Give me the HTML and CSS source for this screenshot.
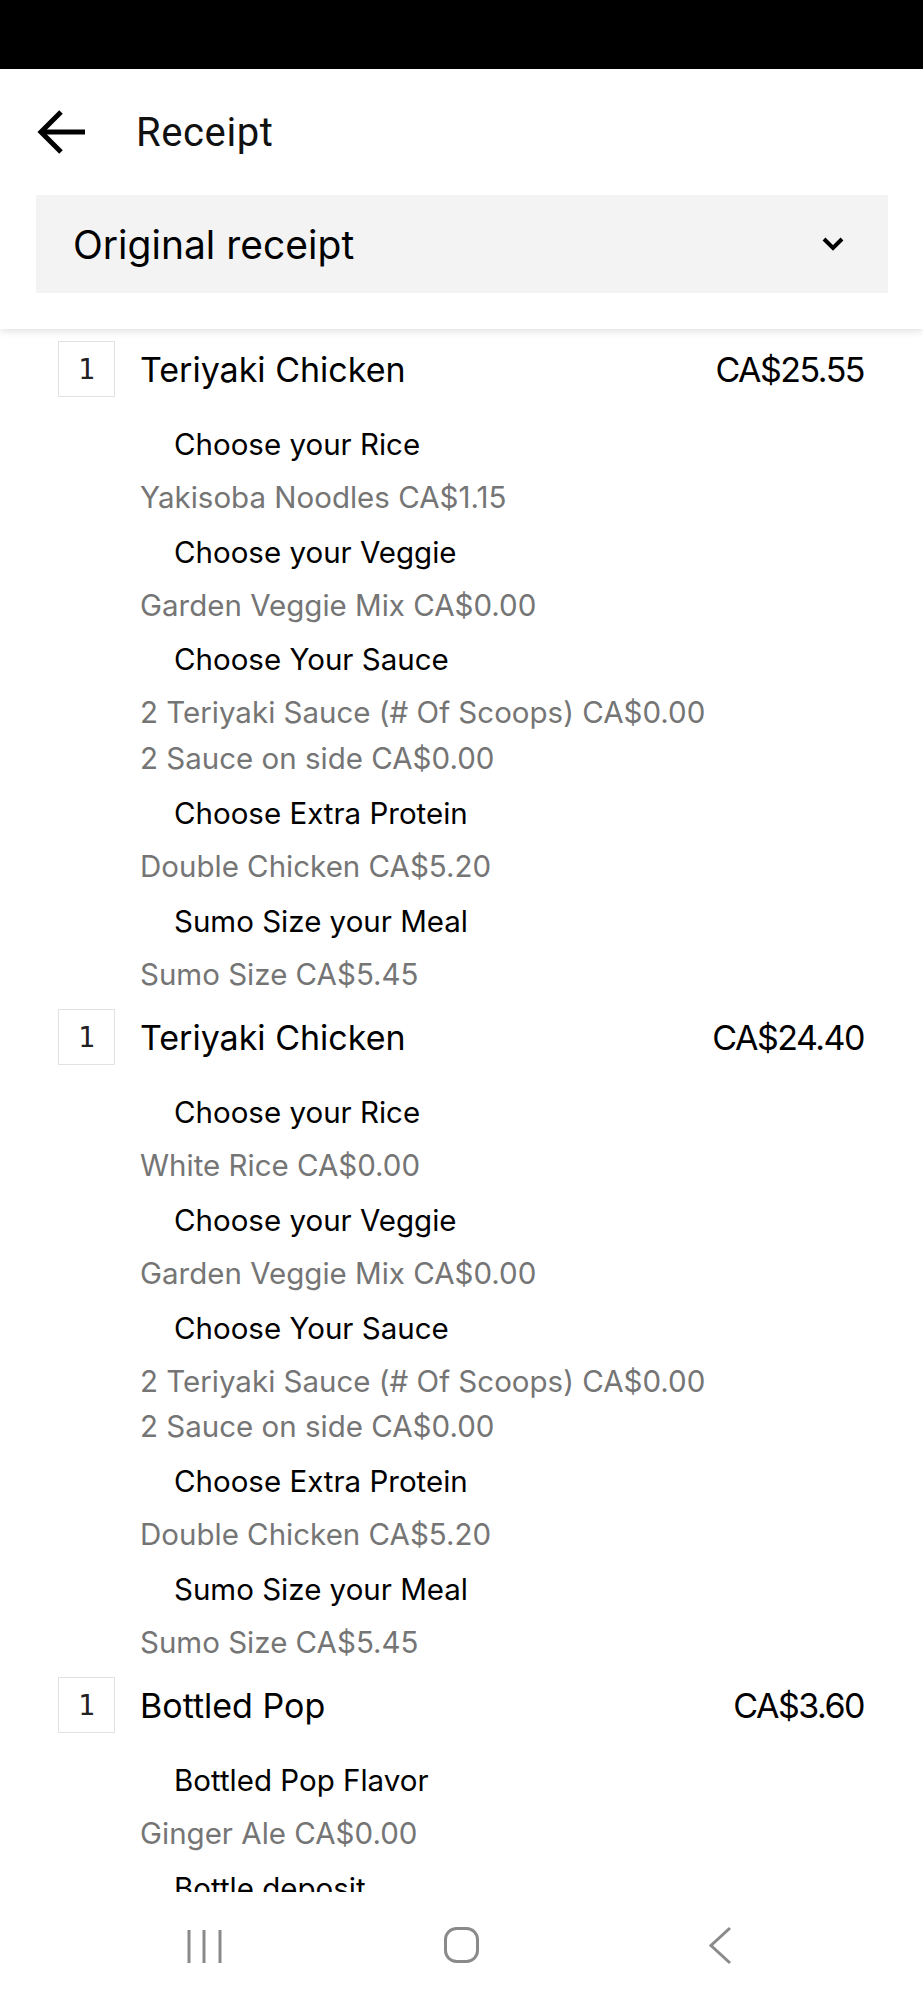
FILE: index.html
```html
<!DOCTYPE html>
<html lang="en">
<head>
<meta charset="utf-8">
<title>Receipt</title>
<link rel="stylesheet" href="styles.css">
</head>
<body>
<div class="page">
  <div class="statusbar"></div>
  <header class="header">
    <div class="toolbar">
      <svg class="back" width="50" height="44" viewBox="0 0 50 44" aria-hidden="true">
        <path d="M49 22H6" fill="none" stroke="#000" stroke-width="5"/>
        <path d="M25 2L5 22l20 20" fill="none" stroke="#000" stroke-width="5"/>
      </svg>
      <h1 class="title">Receipt</h1>
    </div>
    <div class="select">
      <span class="select-label">Original receipt</span>
      <svg class="chev" width="22" height="14" viewBox="0 0 22 14" aria-hidden="true">
        <path d="M2 2l9 9 9-9" fill="none" stroke="#000" stroke-width="4"/>
      </svg>
    </div>
  </header>

  <main class="list">
    <section class="item">
      <div class="item-row">
        <span class="qty">1</span>
        <span class="name">Teriyaki Chicken</span>
        <span class="price">CA$25.55</span>
      </div>
      <div class="groups">
        <div class="group-title">Choose your Rice</div>
        <div class="opt">Yakisoba Noodles CA$1.15</div>
        <div class="group-title">Choose your Veggie</div>
        <div class="opt">Garden Veggie Mix CA$0.00</div>
        <div class="group-title">Choose Your Sauce</div>
        <div class="opt">2 Teriyaki Sauce (# Of Scoops) CA$0.00</div>
        <div class="opt">2 Sauce on side CA$0.00</div>
        <div class="group-title">Choose Extra Protein</div>
        <div class="opt">Double Chicken CA$5.20</div>
        <div class="group-title">Sumo Size your Meal</div>
        <div class="opt">Sumo Size CA$5.45</div>
      </div>
    </section>

    <section class="item">
      <div class="item-row">
        <span class="qty">1</span>
        <span class="name">Teriyaki Chicken</span>
        <span class="price">CA$24.40</span>
      </div>
      <div class="groups">
        <div class="group-title">Choose your Rice</div>
        <div class="opt">White Rice CA$0.00</div>
        <div class="group-title">Choose your Veggie</div>
        <div class="opt">Garden Veggie Mix CA$0.00</div>
        <div class="group-title">Choose Your Sauce</div>
        <div class="opt">2 Teriyaki Sauce (# Of Scoops) CA$0.00</div>
        <div class="opt">2 Sauce on side CA$0.00</div>
        <div class="group-title">Choose Extra Protein</div>
        <div class="opt">Double Chicken CA$5.20</div>
        <div class="group-title">Sumo Size your Meal</div>
        <div class="opt">Sumo Size CA$5.45</div>
      </div>
    </section>

    <section class="item">
      <div class="item-row">
        <span class="qty">1</span>
        <span class="name">Bottled Pop</span>
        <span class="price">CA$3.60</span>
      </div>
      <div class="groups">
        <div class="group-title">Bottled Pop Flavor</div>
        <div class="opt">Ginger Ale CA$0.00</div>
        <div class="group-title">Bottle deposit</div>
      </div>
    </section>
  </main>

  <nav class="navbar">
    <svg class="nav-icon" width="40" height="40" viewBox="0 0 40 40" aria-hidden="true">
      <path d="M5 4v33M20 4v33M36 4v33" fill="none" stroke="#8a8a8a" stroke-width="3"/>
    </svg>
    <svg class="nav-icon" width="40" height="40" viewBox="0 0 40 40" aria-hidden="true">
      <rect x="3.5" y="2.5" width="32" height="33" rx="11" fill="none" stroke="#8a8a8a" stroke-width="3"/>
    </svg>
    <svg class="nav-icon" width="40" height="40" viewBox="0 0 40 40" aria-hidden="true">
      <path d="M30 2L11 19.5 30 37" fill="none" stroke="#8a8a8a" stroke-width="3"/>
    </svg>
  </nav>
</div>
</body>
</html>
```

FILE: styles.css
```css
* { box-sizing: border-box; }

html, body {
  margin: 0;
  padding: 0;
  background: #fff;
}

body {
  font-family: Inter, "Noto Sans", sans-serif;
  color: #000;
}

.page {
  width: 923px;
  height: 2000px;
  display: flex;
  flex-direction: column;
  overflow: hidden;
}

.statusbar {
  height: 69px;
  flex: none;
  background: #000;
}

.header {
  flex: none;
  height: 260px;
  background: #fff;
  position: relative;
  z-index: 2;
  box-shadow: 0 2px 8px rgba(0, 0, 0, 0.13);
}

.toolbar {
  height: 126px;
  display: flex;
  align-items: center;
  padding-left: 36px;
}

.back {
  flex: none;
  display: block;
}

.title {
  margin: 0 0 0 50px;
  font-family: Roboto, "Noto Sans", sans-serif;
  font-weight: 400;
  font-size: 40px;
  letter-spacing: 0.6px;
  color: #111;
}

.select {
  margin: 0 35px 0 36px;
  height: 98px;
  background: #f3f3f3;
  display: flex;
  align-items: center;
  justify-content: space-between;
  padding: 0 44px 0 37px;
}

.select-label {
  font-size: 39px;
}

.chev { display: block; }

.list {
  flex: 1;
  overflow: hidden;
}

.item {
  padding: 12px 59px 0 58px;
}

.item-row {
  display: flex;
  align-items: center;
  height: 56px;
  margin-bottom: 16px;
}

.qty {
  flex: none;
  width: 57px;
  height: 56px;
  border: 1px solid #e2e2e2;
  display: flex;
  align-items: center;
  justify-content: center;
  font-family: "DejaVu Sans Mono", monospace;
  font-size: 28px;
  color: #222;
}

.name {
  flex: 1;
  margin-left: 25px;
  font-size: 34px;
}

.price {
  font-size: 34px;
  letter-spacing: -1.5px;
}

.groups {
  padding-left: 82px;
}

.group-title {
  padding-left: 34px;
  line-height: 62px;
  font-size: 29.5px;
}

.opt {
  line-height: 45.7px;
  font-size: 29.5px;
  color: #757575;
}

.navbar {
  flex: none;
  height: 108px;
  background: #fff;
  display: grid;
  grid-template-columns: repeat(3, 258px);
  justify-content: center;
  align-items: center;
  justify-items: center;
}

.nav-icon { display: block; }
```
